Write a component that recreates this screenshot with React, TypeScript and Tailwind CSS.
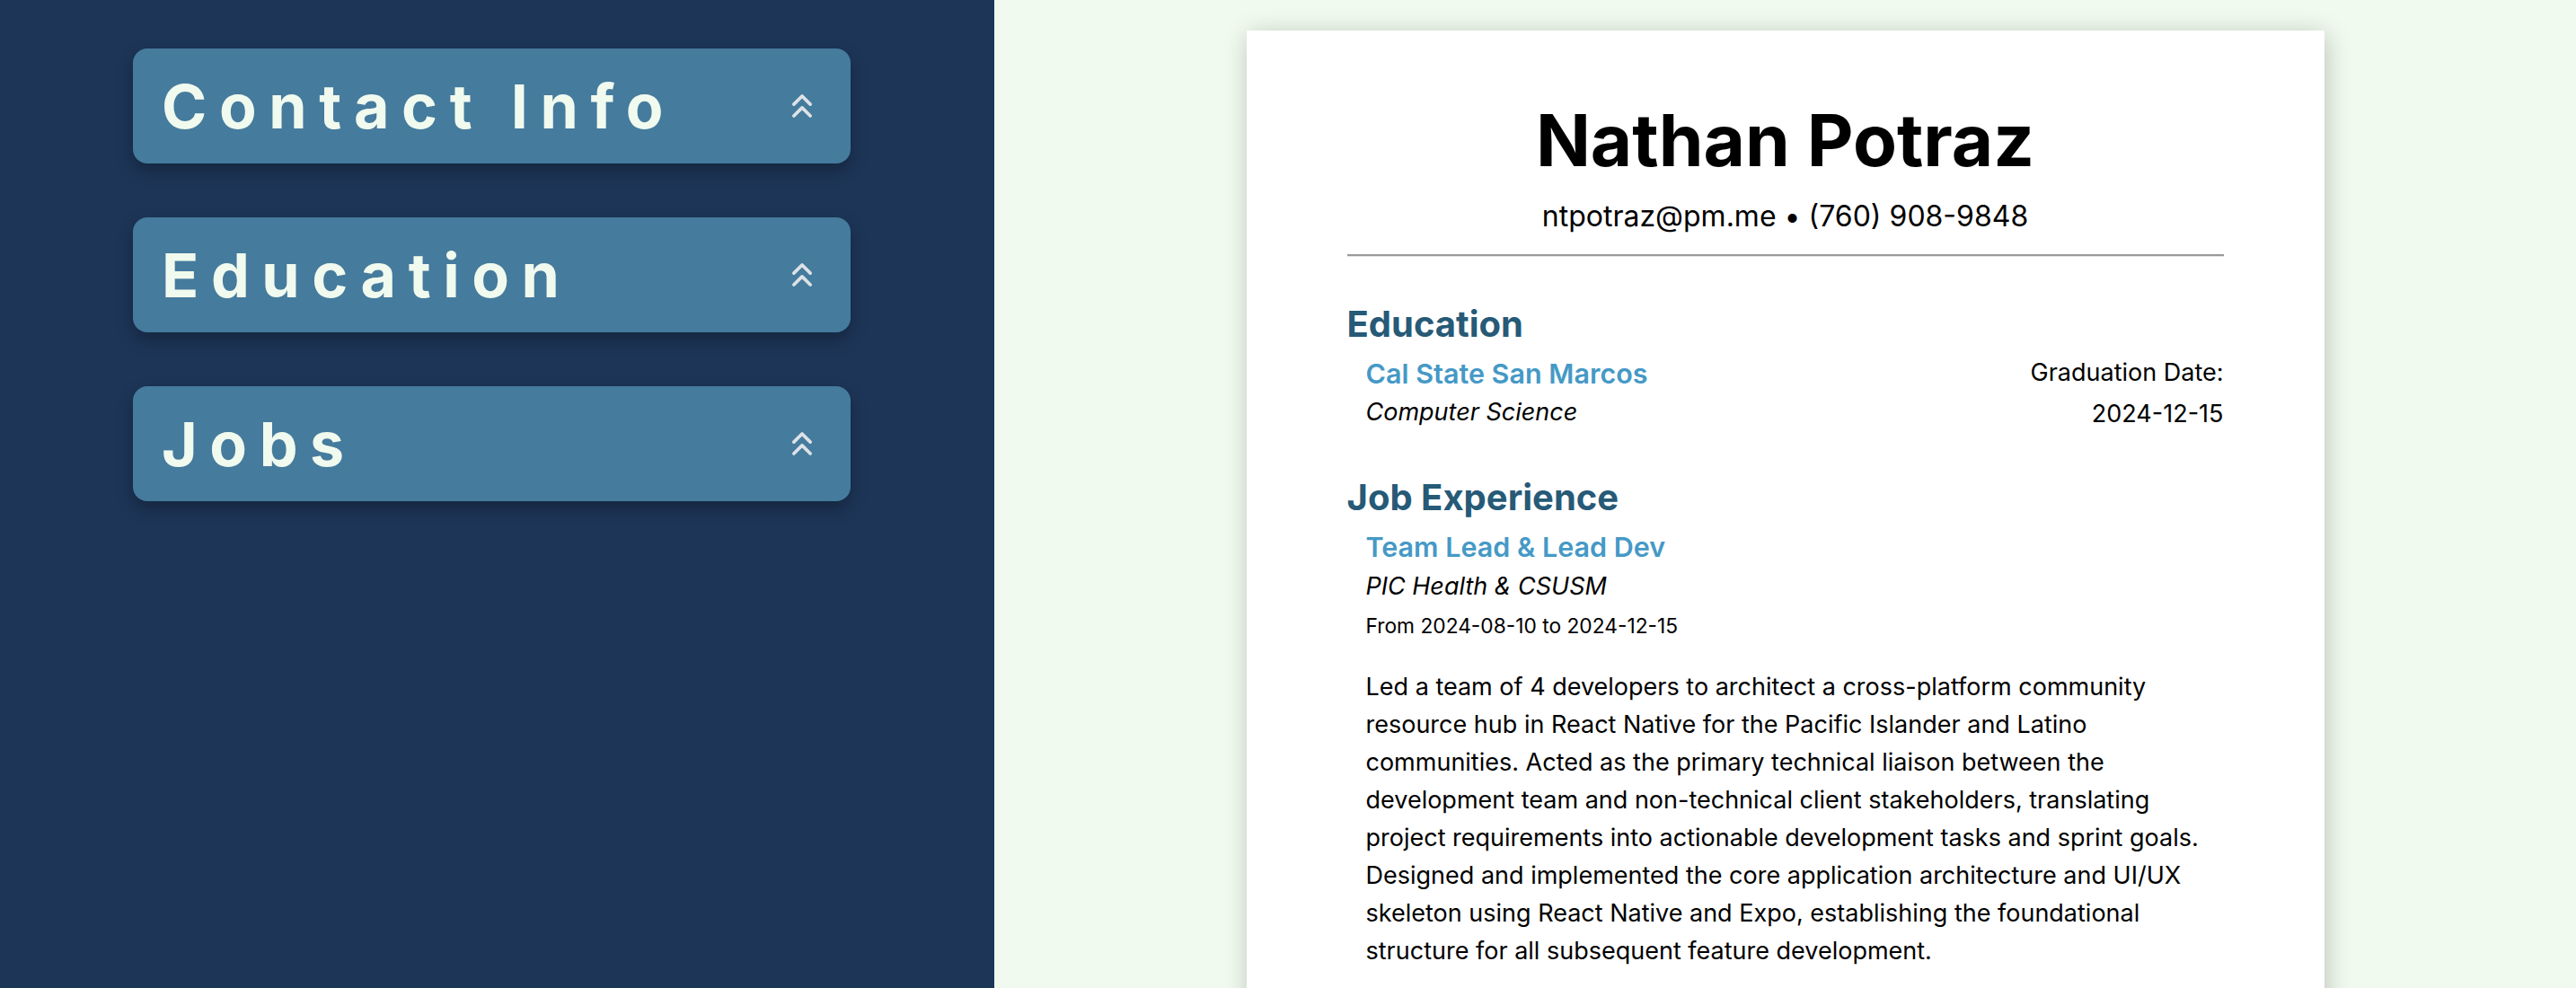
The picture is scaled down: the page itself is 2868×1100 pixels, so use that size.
import React from 'react';
import { ChevronsUp } from 'lucide-react';

const sections = ['Contact Info', 'Education', 'Jobs'];

function SectionToggle({ label }: { label: string }) {
  return (
    <button className="w-[799px] h-[128px] shrink-0 flex items-center justify-between px-8 rounded-2xl bg-[#457b9d] shadow-[0_8px_18px_rgba(0,0,0,0.28)] text-[#f1faee]">
      <span className="text-[68px] leading-none font-bold tracking-[0.2em]">{label}</span>
      <ChevronsUp size={44} strokeWidth={2} className="text-[#dde2e6]" />
    </button>
  );
}

export default function App() {
  return (
    <div className="flex min-h-screen font-[Inter,sans-serif] text-black">
      <aside className="w-[1107px] shrink-0 bg-[#1d3557] pl-[148px] pt-[54px] flex flex-col items-start gap-[60px]">
        {sections.map((s) => (
          <SectionToggle key={s} label={s} />
        ))}
      </aside>

      <main className="flex-1 bg-[#f1faee] pt-[34px] pb-10">
        <article className="mx-auto w-[1200px] bg-white px-[112px] pt-[74px] pb-[120px] shadow-[2px_4px_26px_rgba(0,0,0,0.22)]">
          <h1 className="text-center text-[80px] leading-[96px] font-bold">Nathan Potraz</h1>
          <p className="mt-[17px] text-center text-[32px] leading-[40px]">ntpotraz@pm.me • (760) 908-9848</p>
          <hr className="mt-[22px] border-0 border-t-2 border-b border-t-[#9a9a9a] border-b-[#e4e4e4]" />

          <section className="mt-[51px]">
            <h2 className="text-[40px] leading-[48px] font-bold text-[#265a77]">Education</h2>
            <div className="mt-[13px] pl-[21px] flex justify-between">
              <div>
                <h3 className="text-[30.5px] leading-[36px] font-semibold text-[#4599c6]">Cal State San Marcos</h3>
                <p className="mt-[8px] text-[27px] leading-[34px] italic">Computer Science</p>
              </div>
              <div className="text-right text-[27px] leading-[34px]">
                <p>Graduation Date:</p>
                <p className="mt-[12px]">2024-12-15</p>
              </div>
            </div>
          </section>

          <section className="mt-[52px]">
            <h2 className="text-[40px] leading-[48px] font-bold text-[#265a77]">Job Experience</h2>
            <div className="mt-[13px] pl-[21px]">
              <h3 className="text-[30.5px] leading-[36px] font-semibold text-[#4599c6]">Team Lead &amp; Lead Dev</h3>
              <p className="mt-[9px] text-[27px] leading-[34px] italic">PIC Health &amp; CSUSM</p>
              <p className="mt-[13px] text-[22.75px] leading-[28px]">From 2024-08-10 to 2024-12-15</p>
              <p className="mt-[33px] text-[27px] leading-[42px]">
                Led a team of 4 developers to architect a cross-platform community resource hub in React Native for
                the Pacific Islander and Latino communities. Acted as the primary technical liaison between the
                development team and non-technical client stakeholders, translating project requirements into
                actionable development tasks and sprint goals. Designed and implemented the core application
                architecture and UI/UX skeleton using React Native and Expo, establishing the foundational structure
                for all subsequent feature development.
              </p>
            </div>
          </section>
        </article>
      </main>
    </div>
  );
}
